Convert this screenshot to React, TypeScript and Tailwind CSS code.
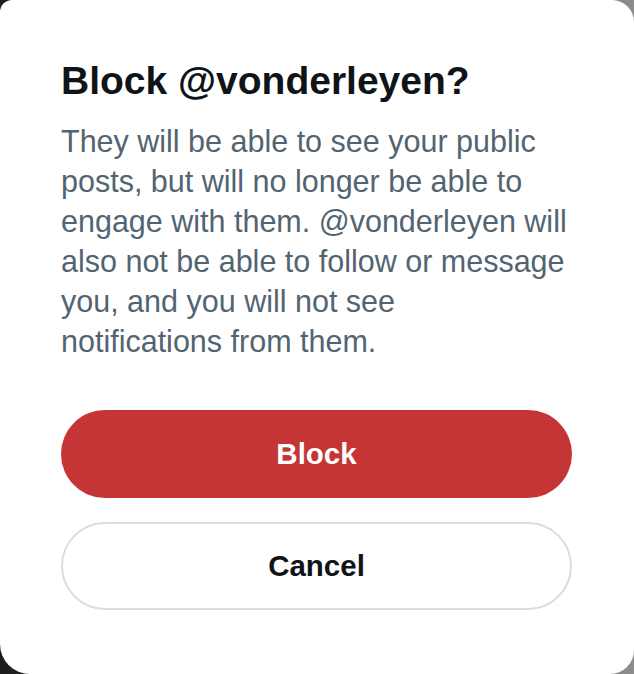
import React from "react";

const lines = [
  "They will be able to see your public",
  "posts, but will no longer be able to",
  "engage with them. @vonderleyen will",
  "also not be able to follow or message",
  "you, and you will not see",
  "notifications from them.",
];

const BlockDialog = () => {
  return (
    <div className="w-[634px] h-[674px] overflow-hidden bg-gradient-to-r from-[#1c1c1c] to-[#8c8c8c]">
      <div
        className="h-[674px] bg-white rounded-tl-[12px] rounded-tr-[22px] rounded-bl-[30px] rounded-br-[24px] pt-[57px] pl-[61px] pr-[62px] flex flex-col"
        style={{ fontFamily: '"Liberation Sans", Arial, sans-serif' }}
      >
        <h1 className="text-[39px] leading-[48px] font-bold text-[#0f1419]">
          {"Block @vonderleyen?"}
        </h1>
        <p className="mt-[16px] text-[30.5px] leading-[40px] text-[#536471]">
          {lines.map((l) => (
            <span key={l} className="block">
              {l}
            </span>
          ))}
        </p>

        <div className="mt-[49px] flex flex-col gap-[24px]">
          <button className="h-[88px] w-full rounded-full bg-[#c53536] text-white text-[29.5px] font-bold">
            Block
          </button>
          <button className="h-[88px] w-full rounded-full bg-white border-2 border-[#d7dde0] text-[#0f1419] text-[29.5px] font-bold">
            Cancel
          </button>
        </div>
      </div>
    </div>
  );
};

export default function App() {
  return <BlockDialog />;
}
